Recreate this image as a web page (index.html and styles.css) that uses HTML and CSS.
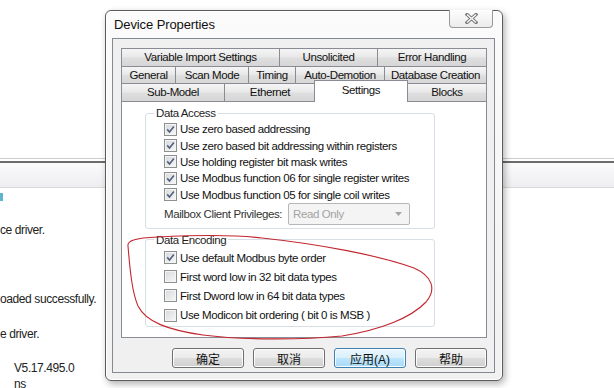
FILE: index.html
```html
<!DOCTYPE html>
<html lang="en">

<head>
    <meta charset="UTF-8">
    <meta name="viewport" content="width=device-width, initial-scale=1.0">
    <title>Device Properties</title>
    <link rel="stylesheet" href="styles.css">
</head>

<body>
    <!-- application window behind the dialog -->
    <div class="desk">
        <div class="desk-top"></div>
        <div class="desk-rule"></div>
        <div class="desk-band"></div>
        <div class="log">
            <div class="log-line"><span class="log-icon"></span></div>
            <div class="log-line"></div>
            <div class="log-line">ce driver.</div>
            <div class="log-line"></div>
            <div class="log-line"></div>
            <div class="log-line"></div>
            <div class="log-line">oaded successfully.</div>
            <div class="log-line"></div>
            <div class="log-line">e driver.</div>
            <div class="log-line"></div>
            <div class="log-line indent">V5.17.495.0</div>
            <div class="log-line indent last">ns</div>
        </div>
    </div>

    <div class="dialog">
        <div class="titlebar">
            <span class="title">Device Properties</span>
            <div class="close">
                <svg width="13" height="11" viewBox="0 0 13 11">
                    <path d="M2 1.5l9 8M11 1.5l-9 8" stroke="#7c7c7c" stroke-width="3.4" stroke-linecap="square"/>
                    <path d="M2 1.5l9 8M11 1.5l-9 8" stroke="#fdfdfd" stroke-width="1.3"/>
                </svg>
            </div>
        </div>

        <div class="client">
            <div class="tabs">
                <div class="tab-row row-1">
                    <div class="tab" style="width:158px">Variable Import Settings</div>
                    <div class="tab" style="width:98px">Unsolicited</div>
                    <div class="tab" style="width:110px">Error Handling</div>
                </div>
                <div class="tab-row row-2">
                    <div class="tab" style="width:54px">General</div>
                    <div class="tab" style="width:73px">Scan Mode</div>
                    <div class="tab" style="width:47px">Timing</div>
                    <div class="tab" style="width:89px">Auto-Demotion</div>
                    <div class="tab" style="width:103px">Database Creation</div>
                </div>
                <div class="tab-row row-3">
                    <div class="tab" style="width:103px">Sub-Model</div>
                    <div class="tab" style="width:91px">Ethernet</div>
                    <div class="tab selected" style="width:94px">Settings</div>
                    <div class="tab" style="width:80px">Blocks</div>
                </div>
            </div>

            <div class="panel">
                <fieldset class="group access">
                    <legend>Data Access</legend>
                    <div class="check"><span class="box"><svg viewBox="0 0 11 11"><path d="M2.2 5.4l2.3 2.6 4.4-5.6" fill="none" stroke="#52607e" stroke-width="1.6"/></svg></span>Use zero based addressing</div>
                    <div class="check"><span class="box"><svg viewBox="0 0 11 11"><path d="M2.2 5.4l2.3 2.6 4.4-5.6" fill="none" stroke="#52607e" stroke-width="1.6"/></svg></span>Use zero based bit addressing within registers</div>
                    <div class="check"><span class="box"><svg viewBox="0 0 11 11"><path d="M2.2 5.4l2.3 2.6 4.4-5.6" fill="none" stroke="#52607e" stroke-width="1.6"/></svg></span>Use holding register bit mask writes</div>
                    <div class="check"><span class="box"><svg viewBox="0 0 11 11"><path d="M2.2 5.4l2.3 2.6 4.4-5.6" fill="none" stroke="#52607e" stroke-width="1.6"/></svg></span>Use Modbus function 06 for single register writes</div>
                    <div class="check"><span class="box"><svg viewBox="0 0 11 11"><path d="M2.2 5.4l2.3 2.6 4.4-5.6" fill="none" stroke="#52607e" stroke-width="1.6"/></svg></span>Use Modbus function 05 for single coil writes</div>
                    <div class="mailbox">
                        <span class="mailbox-label">Mailbox Client Privileges:</span>
                        <div class="select">
                            <span>Read Only</span>
                            <svg width="7" height="4" viewBox="0 0 7 4"><path d="M0 0h7L3.5 4z" fill="#a6a6a6"/></svg>
                        </div>
                    </div>
                </fieldset>

                <fieldset class="group encoding">
                    <legend>Data Encoding</legend>
                    <div class="check"><span class="box"><svg viewBox="0 0 11 11"><path d="M2.2 5.4l2.3 2.6 4.4-5.6" fill="none" stroke="#52607e" stroke-width="1.6"/></svg></span>Use default Modbus byte order</div>
                    <div class="check"><span class="box"></span>First word low in 32 bit data types</div>
                    <div class="check"><span class="box"></span>First Dword low in 64 bit data types</div>
                    <div class="check"><span class="box"></span>Use Modicon bit ordering ( bit 0 is MSB )</div>
                </fieldset>
            </div>

            <div class="buttons">
                <button class="btn">确定</button>
                <button class="btn">取消</button>
                <button class="btn active">应用(A)</button>
                <button class="btn">帮助</button>
            </div>
        </div>
    </div>

    <!-- red hand-drawn mark over the screenshot -->
    <svg class="annotation" width="614" height="388" viewBox="0 0 614 388">
        <path d="M128 246 C127 241 134 238 158 237 C200 235 238 235 262 238 C318 244 378 255 414 268 C432 276 437 289 426 302 C411 318 380 330 342 336 C300 340 242 340 203 335 C168 330 146 322 138 306 C132 292 130 270 128 246"
              fill="none" stroke="#c3262f" stroke-width="1.1"/>
    </svg>
</body>
</html>
```

FILE: styles.css
```css
/* page */
body {
margin: 0;
width: 614px;
height: 388px;
overflow: hidden;
background: #fff;
font-family: "Liberation Sans", Arial, sans-serif;
position: relative;
}

/* application window behind the dialog */
.desk-top {
height: 158px;
}

.desk-rule {
height: 2px;
border-top: 1px solid #cdcdcd;
border-bottom: 2px solid #6c6c6c;
}

.desk-band {
height: 24px;
background: linear-gradient(#fbfbfc, #eeeef1);
border-bottom: 1px solid #d8d8dc;
}

.log {
font-size: 12px;
letter-spacing: -0.4px;
color: #222;
}

.log-line {
height: 17.2px;
line-height: 17.2px;
white-space: nowrap;
}

.log-line.indent {
padding-left: 14px;
}

.log-line.last {
line-height: 14px;
}

.log-icon {
display: inline-block;
width: 3px;
height: 8px;
background: #5fb3cf;
vertical-align: middle;
}

/* dialog window */
.dialog {
position: absolute;
left: 105px;
top: 10px;
width: 398px;
height: 371px;
box-sizing: border-box;
border: 1px solid #5b5b5b;
border-radius: 6px;
background: linear-gradient(#fbfbfb, #f1f1f1);
box-shadow: 2px 3px 7px rgba(0, 0, 0, 0.3), inset 0 0 0 1px #fff;
display: flex;
flex-direction: column;
}

.titlebar {
height: 27px;
flex: none;
display: flex;
align-items: flex-start;
padding-left: 8px;
}

.title {
font-size: 13px;
letter-spacing: -0.1px;
color: #111;
margin-top: 6px;
}

.close {
margin-left: auto;
margin-right: 9px;
width: 44px;
height: 18px;
margin-top: -1px;
box-sizing: border-box;
border: 1px solid #9a9a9a;
border-top: none;
border-radius: 0 0 4px 4px;
background: linear-gradient(#fdfdfd, #ececec);
display: flex;
align-items: center;
justify-content: center;
}

.client {
flex: 1;
margin: 0 7px 7px 6px;
border: 1px solid #858a92;
background: #f0f0f0;
padding: 9px 7px 4px 8px;
display: flex;
flex-direction: column;
font-size: 11.5px;
letter-spacing: -0.4px;
color: #111;
}

/* tabs */
.tab-row {
display: flex;
height: 18px;
}

.tab-row.row-2 {
height: 17px;
}

.tab {
box-sizing: border-box;
flex: none;
border-top: 1px solid #898c95;
border-left: 1px solid #898c95;
background: linear-gradient(#f5f5f5, #e9e9e9 45%, #dedede 55%, #d6d6d6);
text-align: center;
line-height: 16px;
white-space: nowrap;
}

.tab:last-child {
border-right: 1px solid #898c95;
}

.tab.selected {
position: relative;
z-index: 1;
margin: -3px -1px -1px -1px;
height: 22px;
padding-top: 1px;
border-right: 1px solid #898c95;
background: #fff;
}

.panel {
height: 237px;
box-sizing: border-box;
border: 1px solid #898c95;
background: #fff;
padding: 4px 0 0 23px;
}

/* group boxes */
.group {
width: 290px;
box-sizing: border-box;
margin: 0;
border: 1px solid #d5dfe5;
border-radius: 3px;
padding: 1px 0 3px 18px;
}

.group legend {
padding: 0 2px;
margin-left: -10px;
line-height: 14px;
color: #1e1e1e;
}

.group.encoding {
margin-top: 4px;
padding-bottom: 1px;
}

.check {
display: flex;
align-items: center;
height: 16.4px;
white-space: nowrap;
}

.encoding .check {
height: 19.2px;
}

.box {
width: 13px;
height: 13px;
box-sizing: border-box;
flex: none;
margin-right: 3px;
border: 1px solid #8e8f8f;
background: linear-gradient(135deg, #d6d8db, #f8f8f8);
box-shadow: inset 0 0 0 1px #f4f4f4;
display: flex;
}

.box svg {
width: 11px;
height: 11px;
}

.mailbox {
display: flex;
align-items: center;
height: 22px;
}

.mailbox-label {
width: 124px;
flex: none;
color: #333;
}

.select {
width: 122px;
height: 22px;
box-sizing: border-box;
border: 1px solid #b4b8bb;
border-radius: 2px;
background: #f4f4f4;
color: #a3a3a3;
display: flex;
align-items: center;
padding: 0 7px 0 4px;
}

.select svg {
margin-left: auto;
}

/* dialog buttons */
.buttons {
display: flex;
justify-content: flex-end;
gap: 9px;
margin-top: 10px;
}

.btn {
width: 72px;
height: 20px;
padding: 0;
border: 1px solid #707070;
border-radius: 3px;
background: linear-gradient(#f3f3f3, #ebebeb 48%, #dddddd 52%, #cfcfcf);
box-shadow: inset 0 0 0 1px #fcfcfc;
font-family: "Liberation Sans", "Noto Sans CJK SC", sans-serif;
font-size: 12px;
color: #111;
}

.btn.active {
border-color: #3c7fb1;
background: linear-gradient(#eaf6fd, #d9f0fc 48%, #bee6fd 52%, #a7d9f5);
}

/* red hand-drawn mark */
.annotation {
position: absolute;
left: 0;
top: 0;
pointer-events: none;
}
```
